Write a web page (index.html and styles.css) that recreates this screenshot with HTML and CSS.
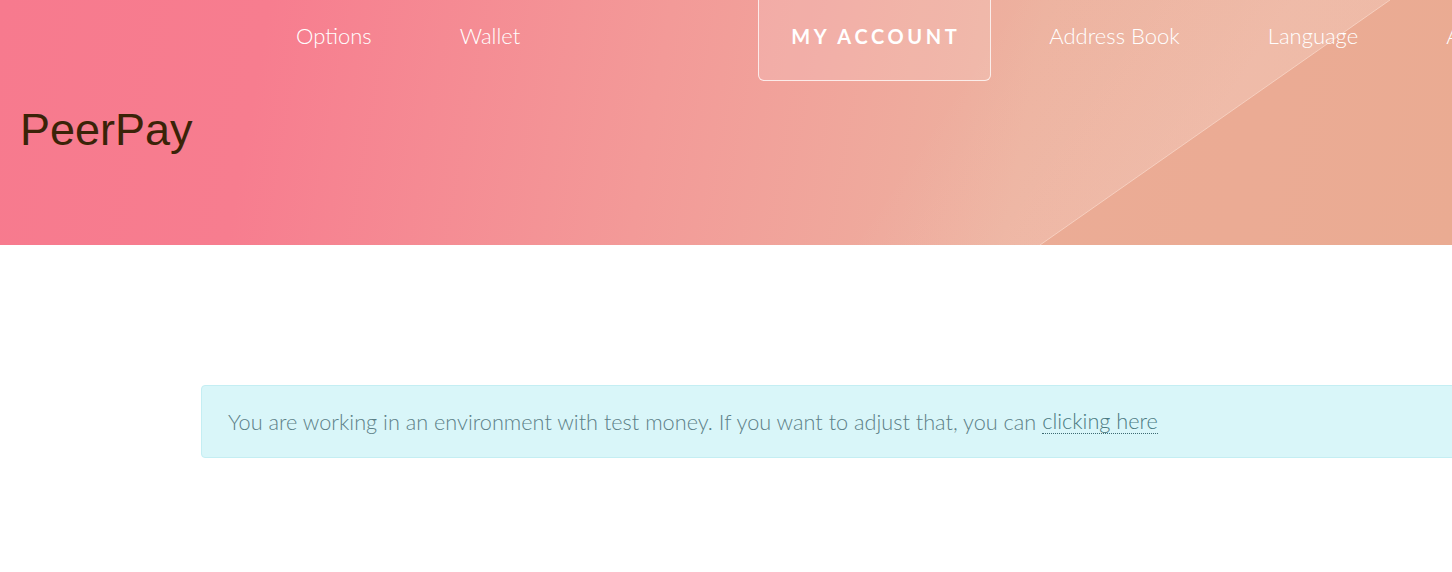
FILE: index.html
```html
<!DOCTYPE html>
<html>
<head>
<meta charset="utf-8">
<title>PeerPay</title>
<link rel="stylesheet" href="styles.css">
</head>
<body>
<header class="hero">
  <svg class="hero-deco" width="1452" height="245" viewBox="0 0 1452 245" aria-hidden="true">
    <defs>
      <linearGradient id="glow" x1="1215" y1="122" x2="1020" y2="-10" gradientUnits="userSpaceOnUse">
        <stop offset="0" stop-color="#fff0e8" stop-opacity="0.16"/>
        <stop offset="1" stop-color="#fff0e8" stop-opacity="0"/>
      </linearGradient>
    </defs>
    <polygon points="900,0 1390,0 1040,245 550,245" fill="url(#glow)"/>
    <polygon points="1390,0 1452,0 1452,245 1040,245" fill="rgba(232,158,128,0.30)"/>
    <line x1="1390" y1="0" x2="1040" y2="245" stroke="rgba(255,232,220,0.55)" stroke-width="1"/>
  </svg>
  <nav class="nav">
    <a class="nav-item" href="#">Options</a>
    <a class="nav-item" href="#">Wallet</a>
    <span class="nav-spacer"></span>
    <a class="nav-item active" href="#">MY ACCOUNT</a>
    <a class="nav-item" href="#">Address Book</a>
    <a class="nav-item" href="#">Language</a>
    <a class="nav-item" href="#">About</a>
  </nav>
  <h1 class="brand">PeerPay</h1>
</header>
<main class="content">
  <div class="alert">You are working in an environment with test money. If you want to adjust that, you can <a class="alert-link" href="#">clicking here</a></div>
</main>
</body>
</html>
```
FILE: styles.css
```css
html, body {
  margin: 0;
  padding: 0;
  background: #ffffff;
  overflow: hidden;
}
body {
  font-family: "Lato", "Open Sans", sans-serif;
  width: 1452px;
  height: 572px;
}
.hero {
  position: relative;
  height: 245px;
  overflow: hidden;
  background: linear-gradient(100deg, #f77a8e 0%, #f77d8f 18%, #f39a98 45%, #edb29f 70%, #ebb09a 100%);
}
.hero-deco {
  position: absolute;
  left: 0;
  top: 0;
}
.nav {
  position: relative;
  display: flex;
  align-items: flex-start;
  padding-left: 252px;
  height: 81px;
  white-space: nowrap;
}
.nav-item {
  display: block;
  color: #ffffff;
  text-decoration: none;
  font-weight: 300;
  font-size: 22px;
  line-height: 72px;
  padding: 0 44px;
}
.nav-spacer {
  width: 179px;
  flex: none;
}
.nav-item.active {
  font-weight: 700;
  font-size: 20px;
  letter-spacing: 3.6px;
  padding: 0 30px 0 32px;
  margin: 0 14px 0 15px;
  height: 80px;
  border: 1px solid rgba(255, 255, 255, 0.75);
  border-top: none;
  border-radius: 0 0 6px 6px;
  background: rgba(255, 255, 255, 0.13);
}
.brand {
  position: relative;
  margin: 23px 0 0 20px;
  font-family: "Liberation Sans", Arial, sans-serif;
  font-weight: 400;
  font-size: 45px;
  line-height: 52px;
  color: #3a2308;
}
.content {
  padding-top: 140px;
  padding-left: 201px;
}
.alert {
  width: 1300px;
  box-sizing: border-box;
  height: 73px;
  padding: 0 26px;
  display: flex;
  align-items: center;
  background: #d9f6f9;
  border: 1px solid #c4eef3;
  border-radius: 4px;
  color: #5c8087;
  font-weight: 300;
  font-size: 21.7px;
  white-space: nowrap;
}
.alert-link {
  color: #4b7a82;
  text-decoration: none;
  border-bottom: 1px dotted #3d6a72;
  margin-left: 6px;
  line-height: 23px;
}
```
